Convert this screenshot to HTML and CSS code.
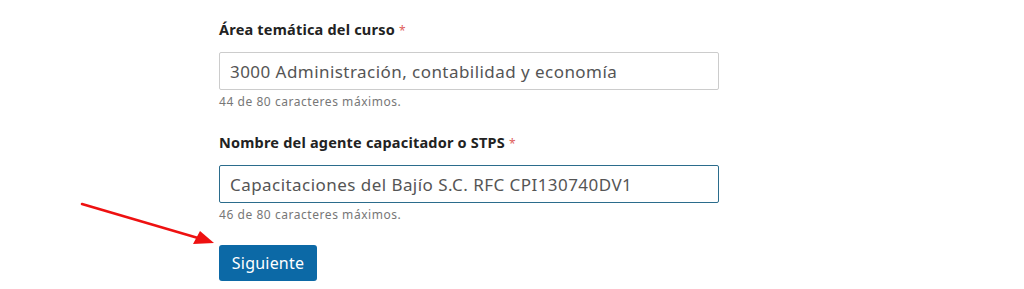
FILE: index.html
```html
<!DOCTYPE html>
<html lang="es">
<head>
    <meta charset="UTF-8">
    <title>Registro del curso</title>
    <link rel="stylesheet" href="styles.css">
</head>
<body>
<div class="page">
    <form class="form">
        <div class="field">
            <label class="label">Área temática del curso <span class="req">*</span></label>
            <input type="text" class="input" value="3000 Administración, contabilidad y economía">
            <div class="hint">44 de 80 caracteres máximos.</div>
        </div>
        <div class="field">
            <label class="label">Nombre del agente capacitador o STPS <span class="req">*</span></label>
            <input type="text" class="input input-focus" value="Capacitaciones del Bajío S.C. RFC CPI130740DV1">
            <div class="hint">46 de 80 caracteres máximos.</div>
        </div>
        <button type="button" class="btn">Siguiente</button>
    </form>
    <svg class="arrow" width="150" height="50" viewBox="0 0 150 50">
        <line x1="2" y1="3" x2="118" y2="37" stroke="#ee1111" stroke-width="2.5" stroke-linecap="round"/>
        <polygon points="134,42 113,43 120,30" fill="#ee1111"/>
    </svg>
</div>
</body>
</html>
```

FILE: styles.css
```css
body {
    margin: 0;
    background: #ffffff;
    font-family: "Noto Sans", "Open Sans", sans-serif;
}
.page {
    position: relative;
    width: 1024px;
    height: 289px;
    overflow: hidden;
}
.form {
    width: 500px;
    margin-left: 219px;
    padding-top: 19px;
}
.field {
    margin-bottom: 22px;
}
.label {
    display: block;
    font-size: 14.5px;
    letter-spacing: 0.2px;
    font-weight: 700;
    color: #222222;
    margin-bottom: 11px;
    line-height: 20px;
}
.req {
    color: #e0605c;
    font-weight: 400;
    font-size: 12px;
}
.input {
    display: block;
    box-sizing: border-box;
    width: 500px;
    height: 38px;
    padding: 0 10px;
    border: 1px solid #cccccc;
    border-radius: 2px;
    font-family: inherit;
    font-size: 17px;
    letter-spacing: 0.45px;
    color: #555555;
    outline: none;
}
.input-focus {
    border-color: #2b6c8c;
}
.hint {
    font-size: 12px;
    letter-spacing: 0.55px;
    color: #777777;
    margin-top: 4px;
    line-height: 16px;
}
.btn {
    display: block;
    margin-top: 17px;
    width: 98px;
    height: 36px;
    background: #0c69a6;
    color: #ffffff;
    border: none;
    border-radius: 3px;
    font-family: inherit;
    font-size: 16px;
    letter-spacing: 0.2px;
}
.arrow {
    position: absolute;
    left: 80px;
    top: 201px;
}
```
